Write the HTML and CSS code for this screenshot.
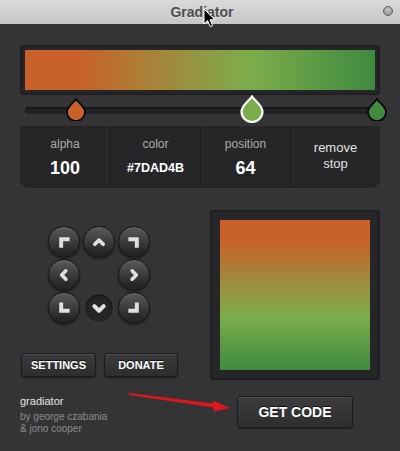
FILE: index.html
```html
<!DOCTYPE html>
<html>
<head>
<meta charset="utf-8">
<link rel="stylesheet" href="styles.css">
</head>
<body>
<div class="window">
  <header class="titlebar">
    <span class="title">Gradiator</span>
    <span class="close"></span>
  </header>
  <main class="content">
    <div class="bar-frame"><div class="bar"></div></div>
    <div class="slider">
      <div class="track"></div>
      <svg class="stop stop-a" viewBox="0 0 20 23"><path d="M10 1 C12 4.5 19 8.5 19 14 A9 9 0 0 1 1 14 C1 8.5 8 4.5 10 1 Z" fill="#c8612a" stroke="#000" stroke-width="1.6"/></svg>
      <svg class="stop stop-b" viewBox="0 0 24 28"><path d="M12 1.5 C14.5 5.5 22.5 10 22.5 16.5 A10.5 10.5 0 0 1 1.5 16.5 C1.5 10 9.5 5.5 12 1.5 Z" fill="#7dad4b" stroke="#fff" stroke-width="2.2"/></svg>
      <svg class="stop stop-c" viewBox="0 0 20 23"><path d="M10 1 C12 4.5 19 8.5 19 14 A9 9 0 0 1 1 14 C1 8.5 8 4.5 10 1 Z" fill="#428a40" stroke="#000" stroke-width="1.6"/></svg>
    </div>
    <div class="info">
      <div class="cell"><span class="label">alpha</span><span class="value">100</span></div>
      <div class="cell"><span class="label">color</span><span class="value small">#7DAD4B</span></div>
      <div class="cell"><span class="label">position</span><span class="value">64</span></div>
      <div class="cell remove">remove<br>stop</div>
    </div>
    <div class="lower">
      <div class="left">
        <div class="pad">
          <span class="key"><svg viewBox="0 0 32 32"><path d="M13 22 V13 H22"/></svg></span>
          <span class="key"><svg viewBox="0 0 32 32"><path d="M11.5 18.5 L16 14 L20.5 18.5" class="chev"/></svg></span>
          <span class="key"><svg viewBox="0 0 32 32"><path d="M10 13 H19 V22"/></svg></span>
          <span class="key"><svg viewBox="0 0 32 32"><path d="M18 11.5 L13.5 16 L18 20.5" class="chev"/></svg></span>
          <span class="gap"></span>
          <span class="key"><svg viewBox="0 0 32 32"><path d="M14 11.5 L18.5 16 L14 20.5" class="chev"/></svg></span>
          <span class="key"><svg viewBox="0 0 32 32"><path d="M13 10 V19 H22"/></svg></span>
          <span class="key active"><svg viewBox="0 0 30 30"><path d="M10 13 L15 18 L20 13" class="chev"/></svg></span>
          <span class="key"><svg viewBox="0 0 32 32"><path d="M10 19 H19 V10"/></svg></span>
        </div>
        <div class="btns">
          <button class="btn small-btn settings">SETTINGS</button>
          <button class="btn small-btn donate">DONATE</button>
        </div>
        <div class="credits">
          <div class="name">gradiator</div>
          <div class="by">by george czabania<br>&amp; jono cooper</div>
        </div>
      </div>
      <div class="right">
        <div class="preview-frame"><div class="preview"></div></div>
        <button class="btn get">GET CODE</button>
      </div>
    </div>
  </main>
  <svg class="red-arrow" viewBox="0 0 110 24" width="110" height="24">
    <path d="M0 1 L92 12.6 L92 16.4 L0 3 Z" fill="#e0161a"/>
    <path d="M84 8.5 L101 16 L85 19.5 Z" fill="#e0161a"/>
  </svg>
  <svg class="cursor" viewBox="0 0 13 20" width="13" height="20">
    <path d="M1 1 L1 16 L4.6 12.6 L7.2 18.6 L9.6 17.6 L7 11.8 L12 11.8 Z" fill="#000" stroke="#fff" stroke-width="1"/>
  </svg>
</div>
</body>
</html>
```

FILE: styles.css
```css
* { box-sizing: border-box; }
html, body { margin: 0; padding: 0; }
body {
  width: 400px;
  height: 451px;
  overflow: hidden;
  background: #343437;
  font-family: "Liberation Sans", Arial, sans-serif;
}
.window {
  position: relative;
  width: 400px;
  height: 451px;
  background: #343437;
}
.titlebar {
  position: relative;
  height: 24px;
  background: linear-gradient(#dadada, #c6c6c6);
  display: flex;
  align-items: center;
  justify-content: center;
}
.title {
  font-weight: bold;
  font-size: 14px;
  color: #4c4c4c;
  margin-left: 4px;
  text-shadow: 0 1px 0 rgba(255,255,255,0.5);
}
.close {
  position: absolute;
  right: 7px;
  top: 6px;
  width: 10px;
  height: 10px;
  border-radius: 50%;
  background: radial-gradient(circle at 50% 35%, #c4c4c4, #8a8a8a);
  border: 1px solid #5c5c5c;
}
.content {
  padding: 0 20px;
}
.bar-frame {
  margin-top: 21px;
  height: 50px;
  padding: 5px;
  background: #262628;
  border-radius: 4px;
  box-shadow: inset 0 0 3px rgba(0,0,0,0.6);
}
.bar {
  height: 40px;
  background: linear-gradient(to right, #c9612a 15%, #7dad4b 64%, #3f8a40 100%);
}
.slider {
  position: relative;
  height: 31px;
  display: flex;
  align-items: center;
  padding: 0 5px;
}
.track {
  flex: 1;
  height: 7px;
  background: #232325;
  border-radius: 4px;
  box-shadow: inset 0 1px 2px rgba(0,0,0,0.6);
}
.stop { position: absolute; }
.stop-a { left: 46px; top: 3px; width: 20px; height: 23px; }
.stop-b { left: 220px; top: 0; width: 24px; height: 28px; }
.stop-c { left: 347px; top: 3px; width: 20px; height: 23px; }
.info {
  height: 62px;
  display: grid;
  grid-template-columns: repeat(4, 1fr);
  background: #262628;
  border-radius: 0 0 8px 8px;
  box-shadow: 0 1px 0 rgba(255,255,255,0.04);
}
.cell {
  display: flex;
  flex-direction: column;
  align-items: center;
  padding-top: 11px;
  border-left: 1px solid #1d1d1f;
}
.cell:first-child { border-left: none; }
.label {
  font-size: 12px;
  line-height: 14px;
  color: #ababab;
}
.value {
  margin-top: 7px;
  font-size: 18px;
  line-height: 20px;
  font-weight: bold;
  color: #fff;
}
.value.small { font-size: 12.5px; }
.remove {
  padding-top: 14px;
  font-size: 13px;
  line-height: 16px;
  color: #e2e2e2;
  text-align: center;
}
.lower {
  display: flex;
  margin-top: 22px;
}
.left { width: 190px; }
.right { width: 170px; display: flex; flex-direction: column; align-items: center; }
.pad {
  margin-left: 28px;
  margin-top: 16px;
  display: grid;
  grid-template-columns: repeat(3, 32px);
  grid-auto-rows: 32px;
  column-gap: 3px;
  row-gap: 1px;
}
.key {
  display: block;
  width: 32px;
  height: 32px;
  border-radius: 50%;
  background: linear-gradient(#5a5a5c, #262628 85%);
  border: 1px solid #151516;
  box-shadow: inset 0 1px 0 rgba(255,255,255,0.12), 0 1px 2px rgba(0,0,0,0.5);
}
.key svg { display: block; width: 30px; height: 30px; }
.key path {
  fill: none;
  stroke: #e0e0e0;
  stroke-width: 4.2;
  stroke-linejoin: miter;
  stroke-linecap: butt;
}
.key path.chev {
  stroke-width: 3.8;
  stroke-linecap: round;
  stroke-linejoin: round;
}
.key.active {
  width: 30px;
  height: 30px;
  margin: 1px;
  background: #242426;
  border: 1px solid #3c3c3e;
  box-shadow: inset 0 1px 3px rgba(0,0,0,0.6);
}
.key.active svg { width: 28px; height: 28px; }
.key.active path { stroke-width: 4.4; }
.btns {
  display: flex;
  gap: 8px;
  margin-top: 29px;
  padding-left: 1px;
}
.btn {
  font-family: "Liberation Sans", Arial, sans-serif;
  font-weight: bold;
  color: #fff;
  background: linear-gradient(#3c3c3e, #2d2d2f);
  border: 1px solid #1b1b1c;
  border-radius: 3px;
  box-shadow: inset 0 1px 0 rgba(255,255,255,0.09), 0 1px 1px rgba(0,0,0,0.4);
  text-shadow: 0 -1px 0 rgba(0,0,0,0.7);
  padding: 0;
  cursor: default;
}
.small-btn { height: 24px; font-size: 11px; }
.settings { width: 75px; }
.donate { width: 74px; }
.credits { margin-top: 18px; }
.name {
  font-size: 11px;
  line-height: 13px;
  color: #e4e4e4;
}
.by {
  margin-top: 3px;
  font-size: 10px;
  line-height: 11.5px;
  color: #8c8c8c;
}
.preview-frame {
  width: 170px;
  height: 170px;
  padding: 10px;
  background: #262628;
  border-radius: 4px;
  box-shadow: inset 0 0 3px rgba(0,0,0,0.6);
}
.preview {
  width: 150px;
  height: 150px;
  background: linear-gradient(to bottom, #c9612a 13%, #7dad4b 64%, #3f8a40 100%);
}
.get {
  margin-top: 16px;
  width: 116px;
  height: 32px;
  font-size: 14px;
}
.red-arrow {
  position: absolute;
  left: 129px;
  top: 392px;
}
.cursor {
  position: absolute;
  left: 203px;
  top: 8px;
}
```
